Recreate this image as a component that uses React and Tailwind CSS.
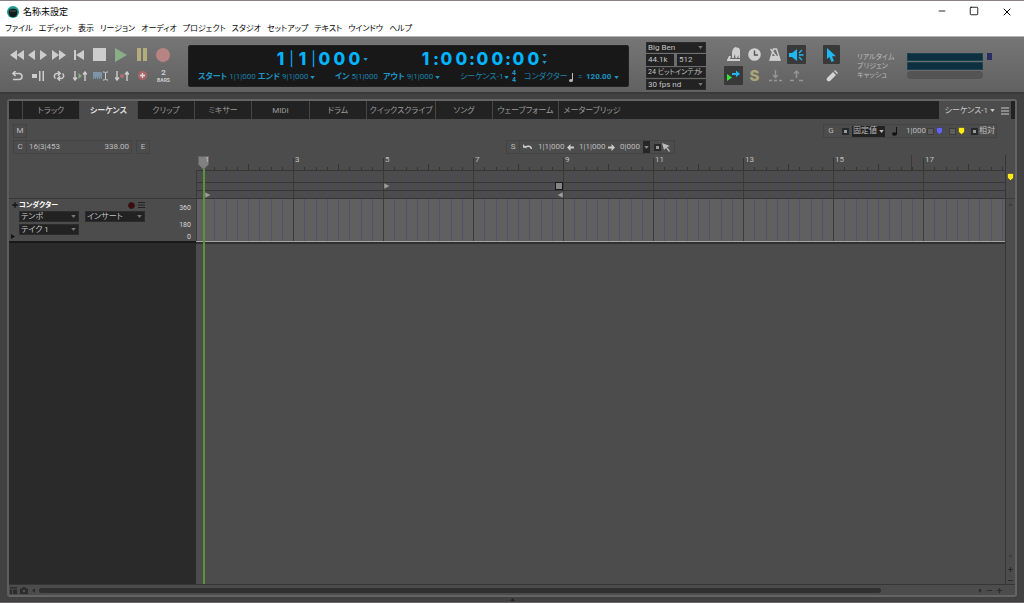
import { useEffect, useRef, useState } from "react";
import clsx from "clsx";
import { Plus, Minus, Square, X } from "lucide-react";

const menus = ["ファイル", "エディット", "表示", "リージョン", "オーディオ", "プロジェクト", "スタジオ", "セットアップ", "テキスト", "ウインドウ", "ヘルプ"];

const tabs = [
  { label: "トラック", width: "w-[57px]" },
  { label: "シーケンス", width: "w-[58px]", active: true },
  { label: "クリップ", width: "w-[57px]" },
  { label: "ミキサー", width: "w-[57px]" },
  { label: "MIDI", width: "w-[58px]" },
  { label: "ドラム", width: "w-[57px]" },
  { label: "クイックスクライブ", width: "w-[69px]" },
  { label: "ソング", width: "w-[57px]" },
  { label: "ウェーブフォーム", width: "w-[66px]" },
  { label: "メーターブリッジ", width: "w-[66px]", last: true },
];

const BAR = 45;
const ORIGIN = 7;

function Caret({ className = "" }) {
  return (
    <svg viewBox="0 0 6 4" className={clsx("h-[3px] w-[5px] shrink-0", className)} fill="currentColor">
      <path d="M0 0h6L3 4z" />
    </svg>
  );
}

function DarkSelect({ label, value, small, className = "w-[60px]" }) {
  return (
    <span className={clsx("relative block", className)}>
      <select
        aria-label={label}
        defaultValue={value}
        className={clsx(
          "block h-[11px] w-full appearance-none overflow-hidden border border-[#2c2c2c] bg-[#222] pl-px leading-[9px] text-[#c4c4c4] outline-none",
          small ? "text-[7px]" : "text-[8px]"
        )}
      >
        <option>{value}</option>
      </select>
      <Caret className="pointer-events-none absolute right-[3px] top-1 text-[#777]" />
    </span>
  );
}

function IconButton({ label, width = "w-[21px]", active, children }) {
  return (
    <button
      aria-label={label}
      className={clsx("flex h-[19px] items-center justify-center", width, active && "rounded-[1px] bg-[#393939]")}
    >
      {children}
    </button>
  );
}

function Transport() {
  return (
    <div className="flex w-[168px] shrink-0 flex-col gap-[2px] text-[#cdcdcd]">
      <div className="flex pl-[3px]">
        <IconButton label="早戻し" width="w-4">
          <svg width="14" height="10" fill="currentColor"><path d="M7 0v10L0 5zM14 0v10L7 5z" /></svg>
        </IconButton>
        <IconButton label="戻る" width="w-3">
          <svg width="8" height="10" fill="currentColor"><path d="M8 0v10L1 5z" /></svg>
        </IconButton>
        <IconButton label="進む" width="w-3">
          <svg width="8" height="10" fill="currentColor"><path d="M1 0v10l7-5z" /></svg>
        </IconButton>
        <IconButton label="早送り" width="w-[19px]">
          <svg width="14" height="10" fill="currentColor"><path d="M0 0v10l7-5zM7 0v10l7-5z" /></svg>
        </IconButton>
        <IconButton label="先頭">
          <svg width="10" height="10" fill="currentColor"><path d="M0 0h2v10H0zM10 0v10L2 5z" /></svg>
        </IconButton>
        <IconButton label="停止">
          <svg width="13" height="13" fill="currentColor"><path d="M0 0h13v13H0z" /></svg>
        </IconButton>
        <IconButton label="再生">
          <svg width="12" height="14" fill="#8bad88"><path d="M0 0v14l12-7z" /></svg>
        </IconButton>
        <IconButton label="一時停止">
          <svg width="10" height="13" fill="#b3ad7c"><path d="M0 0h4v13H0zM6 0h4v13H6z" /></svg>
        </IconButton>
        <IconButton label="録音">
          <svg width="14" height="14" fill="#b88383"><circle cx="7" cy="7" r="7" /></svg>
        </IconButton>
      </div>
      <div className="flex">
        <IconButton label="巻き戻し">
          <svg width="12" height="10" fill="none" stroke="currentColor" strokeWidth="1.6"><path d="M2 2.5h6a3 3 0 0 1 0 6H2M4.5 0 2 2.5 4.5 5" /></svg>
        </IconButton>
        <IconButton label="オートストップ">
          <svg width="12" height="10" fill="currentColor"><path d="M0 3h5v4H0zM7 0h1.5v10H7zM10.5 0H12v10h-1.5z" /></svg>
        </IconButton>
        <IconButton label="メモリーサイクル">
          <svg width="12" height="10" fill="none" stroke="currentColor" strokeWidth="1.5"><path d="M2.500 7.500A2.800 2.800 0 0 1 3.500 2.500H7M5 .3l2.200 2.200L5 4.700M9.500 2.500a2.800 2.800 0 0 1-1 5H5M7 5.300 4.800 7.500 7 9.700" /></svg>
        </IconButton>
        <IconButton label="オートリワインド">
          <svg width="14" height="10" fill="none" stroke="currentColor" strokeWidth="1.4"><path d="M2 0v9M0 6.500 2 9l2-2.500M12 10V1M10 3.500 12 1l2 2.500" /><path d="M5.500 2v6L9 5z" fill="#85ab82" stroke="none" /></svg>
        </IconButton>
        <IconButton label="オーバーダブ">
          <svg width="15" height="10"><path d="M0 1h9v7H8L7.500 5 7 8H6L5.500 5 5 8H4L3.500 5 3 8H2L1.500 5 1 8H0z" fill="#7c95a8" /><path d="M10 1h1.500l1 1 1-1H15M10 9h1.500l1-1 1 1H15M12.500 2v6" stroke="#cdcdcd" fill="none" /></svg>
        </IconButton>
        <IconButton label="パンチイン">
          <svg width="14" height="10" fill="none" stroke="currentColor" strokeWidth="1.4"><path d="M2 0v9M0 6.500 2 9l2-2.500M12 10V1M10 3.500 12 1l2 2.500" /><circle cx="7" cy="5" r="2" fill="#b17070" stroke="none" /></svg>
        </IconButton>
        <IconButton label="オーバーダブ録音">
          <svg width="9" height="9"><circle cx="4.5" cy="4.5" r="4.5" fill="#a66" /><path d="M4.500 2v5M2 4.500h5" stroke="#ddd" strokeWidth="1.3" /></svg>
        </IconButton>
        <IconButton label="カウントオフ">
          <span className="flex flex-col items-center font-bold">
            <span className="text-[8px] leading-[9px]">2</span>
            <span className="text-[5px] leading-[6px]">BARS</span>
          </span>
        </IconButton>
      </div>
    </div>
  );
}

function Counter({ value }) {
  return (
    <span className="flex items-center font-[Inter] text-[17px] font-extrabold leading-5 text-[#00b4ff]">
      {value.split("").map((ch, i) => (
        <span key={i} className={clsx("text-center", ch === "|" ? "w-[7px] text-[14px] font-normal" : ch === ":" ? "w-[6px]" : "w-[15px]")}>
          {ch}
        </span>
      ))}
    </span>
  );
}

function Field({ label, value, caret, width }) {
  return (
    <span className={clsx("flex shrink-0 items-center gap-[2px]", width)}>
      <b className="text-[#1d96c4]">{label}</b>
      <span>{value}</span>
      {caret && <Caret className="text-[#1d96c4]" />}
    </span>
  );
}

function Display() {
  return (
    <div className="h-[42px] w-[441px] shrink-0 rounded-[2px] border border-[#222] bg-[#181818] text-[8px] leading-[10px] text-[#1a84ac]">
      <div className="flex h-[26px] items-center pl-[84px]">
        <span className="flex w-[145px] items-center gap-px">
          <Counter value="1|1|000" />
          <Caret className="text-[#1d96c4]" />
        </span>
        <span className="flex items-center gap-px">
          <Counter value="1:00:00:00" />
          <span className="flex flex-col gap-1 text-[#1d96c4]">
            <Caret />
            <Caret />
          </span>
        </span>
      </div>
      <div className="flex h-[10px] items-center whitespace-nowrap pl-[9px]">
        <Field label="スタート" value="1|1|000" width="w-[60px]" />
        <Field label="エンド" value="9|1|000" caret width="w-[77px]" />
        <Field label="イン" value="5|1|000" width="w-[48px]" />
        <Field label="アウト" value="9|1|000" caret width="w-[77px]" />
        <span className="flex w-[52px] shrink-0 items-center gap-px">シーケンス-1 <Caret className="text-[#1d96c4]" /></span>
        <span className="flex w-3 shrink-0 flex-col text-[7px] font-bold leading-[7px] text-[#1d96c4]">
          <span>4</span>
          <span>4</span>
        </span>
        <span className="w-[45px] shrink-0">コンダクター</span>
        <svg width="5" height="9" fill="#bbb"><ellipse cx="2" cy="7.500" rx="2" ry="1.500" /><path d="M3 0h1v7H3z" /></svg>
        <span className="w-[12px] pl-1">=</span>
        <b className="w-[28px] text-[#1d96c4]">120.00</b>
        <Caret className="text-[#1d96c4]" />
      </div>
    </div>
  );
}

function ToolIcons() {
  return (
    <>
      <div className="grid grid-cols-4 gap-[2px] text-[#cfcfcf]">
        <IconButton width="w-[19px]" label="MIDIパッチスルー">
          <svg width="14" height="15" fill="currentColor"><path d="M5 11V5l1-3 2-2 4 1 1 2v8h-1.500V8L10 11H8.500L8 7 6.500 11zM2 9h2l-1 3h10v2H0v-1z" /></svg>
        </IconButton>
        <IconButton width="w-[19px]" label="待機">
          <svg width="13" height="13"><circle cx="6.500" cy="6.500" r="6.300" fill="#d0d0d0" /><path d="M6.500 2.500v4.500H10" stroke="#555" strokeWidth="1.400" fill="none" /></svg>
        </IconButton>
        <IconButton width="w-[19px]" label="クリック">
          <svg width="13" height="13" fill="none" stroke="currentColor" strokeWidth="1.400"><path d="M4.500 1h3l3.500 11H1zM8.500 10 1.500 1" /><path d="M2.500 8h7.500l1.500 4.500H1z" fill="currentColor" stroke="none" /></svg>
        </IconButton>
        <IconButton width="w-[19px]" label="オーディブルモード" active>
          <svg width="15" height="12" fill="#20b8f4"><path d="M0 4h3l5-4v12L3 8H0z" /><path d="m10 4 3-3M10 6h4.500M10 8l3 3" stroke="#20b8f4" strokeWidth="1.300" /></svg>
        </IconButton>
        <IconButton width="w-[19px]" label="オートスクロール" active>
          <svg width="13" height="12"><path d="M0 4v7l5-3.500z" fill="#38e638" /><path d="M5 3h4V.5L13 4 9 7V5H5z" fill="#20b8f4" /></svg>
        </IconButton>
        <IconButton width="w-[19px]" label="ソロ">
          <span className="font-[Inter] text-[15px] font-extrabold leading-4 text-[#aaa67a]">S</span>
        </IconButton>
        <IconButton width="w-[19px]" label="下へ">
          <svg width="13" height="12" fill="none" stroke="#969696" strokeWidth="1.400"><path d="M6.500 0v7M4 5l2.500 2.500L9 5M0 10.500h3M5 10.500h3M10 10.500h3" /></svg>
        </IconButton>
        <IconButton width="w-[19px]" label="上へ">
          <svg width="13" height="12" fill="none" stroke="#969696" strokeWidth="1.400"><path d="M6.500 8V1M4 3.500 6.500 1 9 3.500M0 10.500h4M9 10.500h4" /></svg>
        </IconButton>
      </div>
      <div className="ml-[17px] flex flex-col gap-[2px]">
        <IconButton width="w-[17px]" label="選択ツール" active>
          <svg width="9" height="14" fill="#20b8f4"><path d="M0 0v11l2.500-2L4.500 14l2.500-1L5 8.200h4z" /></svg>
        </IconButton>
        <IconButton width="w-[17px]" label="鉛筆ツール">
          <svg width="12" height="12" fill="#d4d4d4"><path d="m0 12 1-4 6-6 3 3-6 6zM8 1l1-1 3 3-1 1z" /><path d="m0 12 .5-2L2 11.500z" fill="#333" /></svg>
        </IconButton>
      </div>
    </>
  );
}

function ControlPanel() {
  return (
    <div className="flex h-[58px] items-start border-b-2 border-t border-b-[#3a3a3a] border-t-[#b5b5b5] bg-linear-to-b from-[#767676] to-[#616161] pl-[6px] pt-2">
      <Transport />
      <div className="ml-[14px]"><Display /></div>
      <div className="-mt-[3px] ml-[17px] flex flex-col gap-px">
        <DarkSelect label="クロック" value="Big Ben" />
        <div className="flex gap-[3px] text-[8px] leading-[12px] text-[#c4c4c4]">
          <span className="w-[28px] bg-[#222] pl-[2px]">44.1k</span>
          <span className="flex-1 bg-[#222] pl-[2px]">512</span>
        </div>
        <DarkSelect label="ビット" value="24 ビットインテガ" small />
        <DarkSelect label="フレームレート" value="30 fps nd" />
      </div>
      <div className="ml-[18px] flex items-start"><ToolIcons /></div>
      <div className="ml-[17px] flex pt-2 text-[#bbb]">
        <div className="w-[50px] whitespace-nowrap text-[7px] leading-[9px]">
          <div>リアルタイム</div>
          <div>プリジェン</div>
          <div>キャッシュ</div>
        </div>
        <div className="flex w-[76px] flex-col gap-px">
          <div className="h-[8px] border border-[#1b4351] bg-[#0c303f]" />
          <div className="h-[8px] border border-[#1b4351] bg-[#0c303f]" />
          <div className="h-[8px] rounded-full bg-[#545454]" />
        </div>
        <div className="ml-1 h-[7px] w-[5px] bg-[#2a2d63]" />
      </div>
    </div>
  );
}

function Marker({ color }) {
  return (
    <svg width="7" height="8" className="shrink-0">
      <path d="M.5.5h6v4.500L3.500 7.500.5 5z" fill={color} stroke="#333" strokeWidth=".5" />
    </svg>
  );
}

function InfoRows() {
  const box = "border border-[#434343] flex items-center";
  return (
    <div className="space-y-[2px] whitespace-nowrap px-1 pb-px pt-[5px] text-[8px] leading-3 text-[#bdbdbd]">
      <div className="flex justify-between">
        <button className={clsx(box, "h-[14px] w-[14px] justify-center")}>M</button>
        <div className={clsx(box, "mr-[14px] h-[14px] w-[174px]")}>
          <span className="w-[14px] text-center">G</span>
          <input type="checkbox" aria-label="グリッド" className="ml-[4px] size-[7px] appearance-none border-2 border-[#292929] bg-[#999]" />
          <span className="ml-[3px] flex h-[11px] w-[33px] items-center justify-between bg-[#222] px-px">
            固定値 <Caret />
          </span>
          <svg width="6" height="9" className="ml-[7px]"><ellipse cx="2.500" cy="7" rx="2.500" ry="1.700" fill="#111" /><path d="M4 0h1v7H4z" fill="#111" /></svg>
          <span className="ml-[8px] w-[21px]">1|000</span>
          <input type="checkbox" aria-label="青マーカー" className="mr-[2px] size-[7px] appearance-none border border-[#3c3c3c] bg-[#5e5e5e]" />
          <Marker color="#6464f4" />
          <input type="checkbox" aria-label="黄マーカー" className="ml-[6px] mr-[2px] size-[7px] appearance-none border border-[#3c3c3c] bg-[#5e5e5e]" />
          <Marker color="#ffe818" />
          <label className="ml-[6px] flex items-center gap-px">
            <input type="checkbox" className="size-[7px] appearance-none border-2 border-[#292929] bg-[#999]" />
            相対
          </label>
        </div>
      </div>
      <div className="flex">
        <span className={clsx(box, "h-[14px] w-[14px] justify-center")}>C</span>
        <div className={clsx(box, "h-[14px] w-[105px] justify-between border-l-0 px-[2px]")}>
          <span>16|3|453</span>
          <span>338.00</span>
        </div>
        <button className={clsx(box, "ml-[4px] h-[14px] w-[14px] justify-center")}>E</button>
        <div className={clsx(box, "ml-[356px] h-[14px] w-[169px]")}>
          <span className="w-[13px] border-r border-[#434343] text-center">S</span>
          <svg width="9" height="6" className="ml-[3px]" fill="none" stroke="#ccc" strokeWidth="1.500"><path d="M8.500 5C8 2 5 1.500 2 3" /><path d="M0 3.500V0l4 4.500z" fill="#ccc" stroke="none" /></svg>
          <span className="ml-[6px] w-[27px]">1|1|000</span>
          <svg width="7" height="7" className="mx-[2px]" fill="#ccc"><path d="M0 3.500 3.500 0v2.500H7v2H3.500V7z" /></svg>
          <span className="ml-[3px] w-[27px]">1|1|000</span>
          <svg width="7" height="7" className="mx-[2px]" fill="#ccc"><path d="M7 3.500 3.500 0v2.500H0v2h3.500V7z" /></svg>
          <span className="ml-[3px] w-[23px]">0|000</span>
          <button aria-label="選択メニュー" className="flex h-3 w-[7px] items-center justify-center bg-[#262626] text-[#888]"><Caret /></button>
          <input type="checkbox" aria-label="範囲" className="ml-[4px] size-[7px] shrink-0 appearance-none border-2 border-[#292929] bg-[#999]" />
          <svg width="8" height="9" className="ml-px shrink-0" fill="#bbb"><path d="M0 0l8 3-3 1 3 4-1 1-3-4-2 2z" /></svg>
        </div>
      </div>
    </div>
  );
}

function Timeline() {
  const ref = useRef(null);
  const [width, setWidth] = useState(809);

  useEffect(() => {
    const observer = new ResizeObserver(([entry]) => setWidth(entry.contentRect.width));
    observer.observe(ref.current);
    return () => observer.disconnect();
  }, []);

  const bars = Array.from({ length: Math.max(1, Math.ceil((width - ORIGIN - 12) / BAR)) }, (_, i) => i);

  return (
    <div ref={ref} className="absolute inset-0 overflow-hidden">
      <svg className="h-full w-full" shapeRendering="crispEdges">
        <rect y="44" width="100%" height="43" fill="#606060" />
        {bars.map((b) => {
          const x = ORIGIN + b * BAR;
          return [0, 11, 23, 34].map((dx, q) => {
            const major = q === 0 && b % 2 === 0;
            return (
              <g key={`${b}-${q}`}>
                <rect x={x + dx} y={major ? 3 : q === 0 ? 9 : 12} width="1" height={major ? 13 : q === 0 ? 7 : 4} fill="#343434" />
                <rect x={x + dx} y="16" width="1" height="71" fill={major ? "#3a3a3a" : "#4a4a6c"} opacity={major ? 1 : 0.65} />
              </g>
            );
          });
        })}
        <rect x="715" width="1" height="16" fill="#393939" />
        <path d="M0 15.500h3000M0 27.500h3000M0 35.500h3000M0 43.500h3000" stroke="#363636" />
        <path d="M.5 15v73" stroke="#3a3a3a" />
        <rect y="86" width="100%" height="1" fill="#a3a3a3" />
        <rect y="87" width="100%" height="2" fill="#303030" />
        <path d="M2.500 1.500h10v8l-5 5-5-5z" fill="#808080" stroke="#666" />
        <path d="M9 37v6l6-3zM188 28v6l6-3zM367 37v6l-6-3z" fill="#a0a0a0" stroke="#444" strokeWidth=".5" shapeRendering="auto" />
        <rect x="359" y="27" width="7" height="7" fill="#858585" stroke="#171717" />
        <rect x="7" y="14" width="2" height="100%" fill="#57953a" />
        {bars.filter((b) => b % 2 === 0).map((b) => (
          <text key={b} x={ORIGIN + b * BAR + 2} y="7" fontSize="8" fill="#c0c0c0">{b + 1}</text>
        ))}
      </svg>
    </div>
  );
}

function ConductorTrack() {
  return (
    <div className="flex h-[45px] border-b-2 border-t border-b-[#191919] border-t-[#373737] text-[8px] text-[#d8d8d8]">
      <div className="flex w-[10px] shrink-0 flex-col items-end justify-between py-[2px] text-[#151515]">
        <Plus size={8} strokeWidth={4} />
        <svg width="4" height="5" className="mr-1" fill="currentColor"><path d="M0 0v5l4-2.500z" /></svg>
      </div>
      <div className="w-[126px]">
        <div className="flex h-3 items-center justify-between leading-[10px]">
          <b className="whitespace-nowrap text-[7px] text-white">コンダクター</b>
          <span className="flex items-center gap-[3px]">
            <button aria-label="録音可" className="size-[7px] rounded-full border border-[#222] bg-[#480707]" />
            <svg width="7" height="6" stroke="#222"><path d="M0 .5h7M0 3h7M0 5.500h7" /></svg>
          </span>
        </div>
        <div className="grid grid-cols-2 gap-x-[6px] gap-y-[2px]">
          <DarkSelect label="パラメーター" value="テンポ" className="w-full" />
          <DarkSelect label="モード" value="インサート" className="w-full" />
          <DarkSelect label="テイク" value="テイク 1" className="w-full" />
        </div>
      </div>
      <div className="ml-auto flex flex-col justify-between pr-[5px] pt-[5px] text-right text-[7px] leading-[8px]">
        <span>360</span>
        <span className="mt-1">180</span>
        <span>0</span>
      </div>
    </div>
  );
}

export default function App() {
  return (
    <div className="flex min-h-screen flex-col overflow-hidden bg-[#414141] font-['Roboto','Noto_Sans_CJK_JP',sans-serif] [font-feature-settings:'palt']">
      <header className="border-t border-[#8a8286] bg-white text-black">
        <div className="flex h-[21px] items-center">
          <svg width="12" height="12" viewBox="0 0 12 12" className="ml-[7px]">
            <circle cx="6" cy="6" r="6" fill="#1b9b91" />
            <path d="M2 4.500C2 2 10 2 10 4.500c1 2 0 5-2 6.500H4C2 9.500 1 6.500 2 4.500z" fill="#151a1c" />
            <path d="M3 5h6" stroke="#5b7475" strokeWidth=".8" />
          </svg>
          <h1 className="ml-1 text-[9px] leading-3">名称未設定</h1>
          <div className="ml-auto flex">
            <button aria-label="最小化" className="flex w-8 justify-center"><Minus size={10} strokeWidth={2} /></button>
            <button aria-label="最大化" className="flex w-8 justify-center"><Square size={10} strokeWidth={2} /></button>
            <button aria-label="閉じる" className="flex w-[34px] justify-center"><X size={12} strokeWidth={2} /></button>
          </div>
        </div>
        <nav className="flex h-[14px] items-center gap-[6px] whitespace-nowrap pl-[5px] text-[8px] leading-[14px]">
          {menus.map((m) => (
            <button key={m}>{m}</button>
          ))}
        </nav>
      </header>

      <ControlPanel />

      <main className="mx-[7px] mt-[5px] flex grow flex-col rounded-[3px] border-2 border-[#646464] border-l-[#5d5d5d] bg-[#4c4c4c]">
        <div role="tablist" className="flex h-[18px] bg-[#222] text-[8px] text-[#9b9b9b]">
          <span className="w-[14px] border-r border-[#464646]" />
          {tabs.map((t) => (
            <button
              key={t.label}
              role="tab"
              aria-selected={!!t.active}
              className={clsx(
                "flex items-center justify-center whitespace-nowrap pt-px",
                t.width,
                !t.last && "border-r border-[#464646]",
                t.active && "bg-[#4c4c4c] font-bold text-[#ddd]"
              )}
            >
              {t.label}
            </button>
          ))}
          <button className="ml-auto mr-1 flex w-[72px] items-center justify-end gap-[2px] whitespace-nowrap bg-[#4c4c4c] pr-[2px] pt-px text-[#c8c8c8]">
            シーケンス-1 <Caret />
            <svg width="8" height="8" className="ml-1" stroke="currentColor"><path d="M0 1h8M0 4h8M0 7h8" /></svg>
          </button>
        </div>

        <InfoRows />

        <div className="flex grow border-b border-[#363636]">
          <div className="flex w-[187px] shrink-0 flex-col">
            <div className="h-[43px]" />
            <ConductorTrack />
            <div className="grow bg-[#2a2a2a]" />
          </div>
          <div className="relative min-w-0 flex-1">
            <Timeline />
          </div>
          <div className="flex w-[10px] flex-col items-center border-l border-[#363636] text-[#2c2c2c]">
            <div className="flex h-[44px] w-full items-center justify-center border-b border-[#3c3c3c]"><Marker color="#ffe81c" /></div>
            <Caret className="mt-1 rotate-180 text-[#3e3e3e]" />
            <Caret className="mb-2 mt-auto text-[#3e3e3e]" />
            <button aria-label="縦ズームイン" className="mb-1"><Plus size={7} strokeWidth={4} /></button>
            <button aria-label="縦ズームアウト"><Minus size={7} strokeWidth={4} /></button>
          </div>
        </div>

        <div className="flex h-[10px] items-center gap-[3px] pl-px pr-3 text-[#2c2c2c]">
          <svg width="7" height="7" fill="currentColor"><path d="M0 0h7v1.500H0zM0 2.500h2V7H0zM3 2.500h4V7H3z" /></svg>
          <svg width="8" height="7"><path d="M0 1.500h2L3 0h2l1 1.500h2V7H0z" fill="currentColor" /><circle cx="4" cy="4" r="1.300" fill="#555" /></svg>
          <Caret className="rotate-90" />
          <div className="flex-1">
            <div className="h-[5px] w-9/10 rounded-full bg-[#303030]" />
          </div>
          <Caret className="-rotate-90" />
          <button aria-label="横ズームアウト"><Minus size={7} strokeWidth={4} /></button>
          <button aria-label="横ズームイン"><Plus size={7} strokeWidth={4} /></button>
        </div>
      </main>
      <div className="flex h-[5px] items-center justify-center text-[#222]"><Caret className="rotate-180" /></div>
      <div className="h-px bg-[#6a6567]" />
    </div>
  );
}
